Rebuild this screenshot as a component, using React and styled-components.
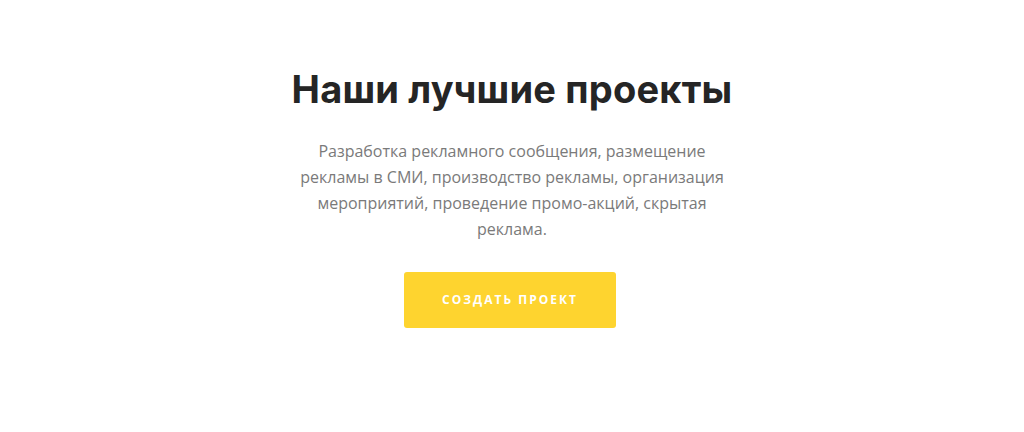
import styled, { createGlobalStyle } from "styled-components";

const GlobalStyle = createGlobalStyle`
  html, body {
    margin: 0;
    padding: 0;
    background: #ffffff;
  }
`;

const Section = styled.section`
  display: flex;
  flex-direction: column;
  align-items: center;
  padding: 64px 20px 0;
  text-align: center;
`;

const Title = styled.h2`
  margin: 0;
  font-family: Inter, "Noto Sans", sans-serif;
  font-weight: 700;
  font-size: 38px;
  line-height: 50px;
  letter-spacing: 0.2px;
  color: #252525;
`;

const Lead = styled.p`
  margin: 24px 0 0;
  max-width: 440px;
  font-family: "Open Sans", sans-serif;
  font-size: 16px;
  line-height: 26px;
  color: #7a7a7a;
`;

const Button = styled.button`
  margin: 30px 4px 0 0;
  width: 212px;
  height: 56px;
  padding: 0 0 2px;
  border: none;
  border-radius: 3px;
  background: #fed42f;
  color: #ffffff;
  font-family: "Open Sans", sans-serif;
  font-weight: 700;
  font-size: 12px;
  letter-spacing: 2px;
  text-transform: uppercase;
  cursor: pointer;
`;

export default function App() {
  return (
    <>
      <GlobalStyle />
      <Section>
        <Title>Наши лучшие проекты</Title>
        <Lead>
          Разработка рекламного сообщения, размещение рекламы в СМИ,
          производство рекламы, организация мероприятий, проведение
          промо-акций, скрытая реклама.
        </Lead>
        <Button>Создать проект</Button>
      </Section>
    </>
  );
}
